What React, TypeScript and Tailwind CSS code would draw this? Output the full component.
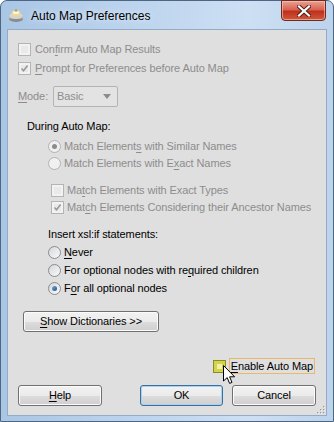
import React from "react";

const FONT = { fontFamily: '"Liberation Sans", Arial, sans-serif' };

function U({ children }: { children: React.ReactNode }) {
  return <span className="underline decoration-1 underline-offset-[2px]">{children}</span>;
}

function CheckMark({ color }: { color: string }) {
  return (
    <svg width="9" height="9" viewBox="0 0 9 9" className="absolute left-[1px] top-[1px]">
      <path d="M1.5 4.5 L3.5 6.8 L7.6 1.6" fill="none" stroke={color} strokeWidth="1.6" />
    </svg>
  );
}

function Check({ checked, disabled }: { checked?: boolean; disabled?: boolean }) {
  return (
    <span
      className={
        "relative w-[13px] h-[13px] shrink-0 border p-[2px] flex " +
        (disabled ? "border-[#b4b4b4] bg-[#f2f2f2]" : "border-[#8e8f8f] bg-white")
      }
    >
      <span
        className={
          "flex-1 " +
          (disabled
            ? "bg-[#e9e9e9]"
            : "bg-gradient-to-br from-[#c9ced4] to-[#f4f5f6]")
        }
      />
      {checked && <CheckMark color={disabled ? "#9a9a9a" : "#3a3a3a"} />}
    </span>
  );
}

function Radio({ checked, disabled }: { checked?: boolean; disabled?: boolean }) {
  return (
    <span
      className={
        "relative w-[13px] h-[13px] shrink-0 rounded-full border flex items-center justify-center " +
        (disabled
          ? "border-[#b2b2b2] bg-[#f0f0f0]"
          : "border-[#8a8c8e] bg-gradient-to-br from-[#d4d7da] to-[#fafafa]")
      }
    >
      {checked && (
        <span
          className={
            "w-[5px] h-[5px] rounded-full " +
            (disabled ? "bg-[#8c8c8c]" : "bg-gradient-to-br from-[#7fa9d6] to-[#1f4f86]")
          }
        />
      )}
    </span>
  );
}

function Btn({
  children,
  w,
  def,
}: {
  children: React.ReactNode;
  w: string;
  def?: boolean;
}) {
  return (
    <div
      className={
        "h-[21px] rounded-[3px] border flex items-center justify-center text-[11px] text-black " +
        w +
        (def
          ? " border-[#3c6f9e] shadow-[inset_0_0_0_1px_#a6d3f2]"
          : " border-[#707070] shadow-[inset_0_0_0_1px_#fbfbfb]")
      }
      style={{
        background:
          "linear-gradient(#f2f2f2 0%, #ebebeb 50%, #dddddd 51%, #cfcfcf 100%)",
      }}
    >
      {children}
    </div>
  );
}

function Row({
  h,
  className,
  children,
}: {
  h: string;
  className?: string;
  children: React.ReactNode;
}) {
  return <div className={"flex items-center " + h + " " + (className ?? "")}>{children}</div>;
}

export default function App() {
  const dis = "text-[#8d8d8d]";
  return (
    <div className="w-[334px] h-[422px] bg-white" style={FONT}>
      <div
        className="relative w-[334px] h-[422px] rounded-t-[7px] border border-[#4f6682] flex flex-col"
        style={{
          background:
            "linear-gradient(90deg, #a9c6e5 0%, #bcd4ee 40%, #cddff3 75%, #bcd3ec 100%)",
        }}
      >
        {/* Title bar */}
        <div className="h-[28px] flex items-center pl-[7px] shrink-0">
          <svg width="16" height="15" viewBox="0 0 16 15" className="mt-[1px]">
            <ellipse cx="8" cy="11" rx="7" ry="3" fill="#8c8c8c" />
            <rect x="1" y="8" width="14" height="3" fill="#a6a6a6" />
            <ellipse cx="8" cy="8" rx="7" ry="3" fill="#d9d4c6" />
            <path d="M3 8 Q3 2 8 2 Q13 2 13 8 Z" fill="#e8d8a8" />
            <ellipse cx="8" cy="4.5" rx="3" ry="1.5" fill="#fff7d9" />
            <circle cx="8" cy="2.5" r="1.2" fill="#c79a3c" />
          </svg>
          <span
            className="ml-[7px] text-[12px] text-black mt-[1px]"
            style={{ textShadow: "0 0 6px rgba(255,255,255,0.9)" }}
          >
            Auto Map Preferences
          </span>
        </div>
        {/* Close button */}
        <div
          className="absolute left-[280px] top-[-1px] w-[45px] h-[21px] rounded-b-[4px] border border-[#6b2a22] flex items-center justify-center shadow-[inset_0_0_0_1px_rgba(255,200,190,0.6)]"
          style={{ background: "linear-gradient(#e8a393 0%, #d9634f 45%, #c0301c 55%, #d05a3a 100%)" }}
        >
          <svg width="14" height="12" viewBox="0 0 14 12">
            <path
              d="M2 1.5 L12 10.5 M12 1.5 L2 10.5"
              stroke="#4a2018"
              strokeWidth="4"
              strokeLinecap="square"
            />
            <path
              d="M2 1.5 L12 10.5 M12 1.5 L2 10.5"
              stroke="#ffffff"
              strokeWidth="2.2"
              strokeLinecap="square"
            />
          </svg>
        </div>

        {/* Client area */}
        <div className="mx-[6px] h-[387px] border border-[#95abc5] bg-[#dfdfdf] flex flex-col px-[10px] pt-[10px] text-[11px] tracking-[-0.1px] relative">
          <Row h="h-[18px]">
            <Check disabled />
            <span className={"ml-[4px] " + dis}>
              Con<U>f</U>irm Auto Map Results
            </span>
          </Row>
          <Row h="h-[18px]" className="mt-[1px]">
            <Check disabled checked />
            <span className={"ml-[4px] " + dis}>
              <U>P</U>rompt for Preferences before Auto Map
            </span>
          </Row>
          <Row h="h-[21px]" className="mt-[9px]">
            <span className={dis + " w-[35px]"}>
              <U>M</U>ode:
            </span>
            <div className="w-[65px] h-[21px] rounded-[2px] border border-[#b0b4b8] bg-[#e3e3e3] flex items-center pl-[3px] pr-[6px]">
              <span className={dis}>Basic</span>
              <svg width="8" height="5" viewBox="0 0 8 5" className="ml-auto">
                <path d="M0 0 L8 0 L4 5 Z" fill="#8c8c8c" />
              </svg>
            </div>
          </Row>
          <Row h="h-[18px]" className="mt-[10px] pl-[9px]">
            <span className="text-black">During Auto Map:</span>
          </Row>
          <div className="pl-[30px] flex flex-col mt-[3px]">
            <Row h="h-[17px]">
              <Radio disabled checked />
              <span className={"ml-[3px] " + dis}>
                Match Element<U>s</U> with Similar Names
              </span>
            </Row>
            <Row h="h-[17px]">
              <Radio disabled />
              <span className={"ml-[3px] " + dis}>
                Match Elements with E<U>x</U>act Names
              </span>
            </Row>
          </div>
          <div className="pl-[33px] flex flex-col mt-[10px]">
            <Row h="h-[17px]">
              <Check disabled />
              <span className={"ml-[3px] " + dis}>
                Ma<U>t</U>ch Elements with Exact Types
              </span>
            </Row>
            <Row h="h-[17px]">
              <Check disabled checked />
              <span className={"ml-[3px] " + dis}>
                Mat<U>c</U>h Elements Considering their Ancestor Names
              </span>
            </Row>
          </div>
          <div className="pl-[30px] flex flex-col mt-[9px]">
            <Row h="h-[18px]">
              <span className="text-black">Insert xsl:if statements:</span>
            </Row>
            <Row h="h-[18px]">
              <Radio />
              <span className="ml-[3px] text-black">
                <U>N</U>ever
              </span>
            </Row>
            <Row h="h-[18px]">
              <Radio />
              <span className="ml-[3px] text-black">
                For optional nodes with re<U>q</U>uired children
              </span>
            </Row>
            <Row h="h-[18px]">
              <Radio checked />
              <span className="ml-[3px] text-black">
                F<U>o</U>r all optional nodes
              </span>
            </Row>
          </div>
          <div className="mt-[14px] pl-[5px] flex">
            <Btn w="w-[136px]">
              <span>
                <U>S</U>how Dictionaries &gt;&gt;
              </span>
            </Btn>
          </div>
          <div className="mt-[26px] h-[16px] flex items-center justify-end pr-[1px]">
            <span className="relative w-[13px] h-[13px] border border-[#8a8a30] bg-[#d4d444] flex items-center justify-center">
              <span className="w-[5px] h-[5px] bg-[#f0f0b0]" />
            </span>
            <span className="ml-[3px] h-[16px] px-[1px] border border-[#e9b86c] flex items-center text-black">
              <U>E</U>nable Auto Map
            </span>
          </div>
          <div className="mt-[11px] flex items-center">
            <Btn w="w-[84px]">
              <U>H</U>elp
            </Btn>
            <Btn w="w-[83px] ml-[38px]" def>
              OK
            </Btn>
            <Btn w="w-[84px] ml-[9px]">Cancel</Btn>
          </div>

          {/* resize grip */}
          <svg width="9" height="9" viewBox="0 0 9 9" className="absolute right-[1px] bottom-[1px]">
            {[
              [7, 1],
              [7, 4],
              [4, 4],
              [7, 7],
              [4, 7],
              [1, 7],
            ].map(([x, y], i) => (
              <g key={i}>
                <rect x={x + 0.6} y={y + 0.6} width="1.4" height="1.4" fill="#ffffff" />
                <rect x={x} y={y} width="1.4" height="1.4" fill="#9a9a9a" />
              </g>
            ))}
          </svg>

          {/* mouse cursor */}
          <svg
            width="13"
            height="20"
            viewBox="0 0 13 20"
            className="absolute left-[215px] top-[335px]"
          >
            <path
              d="M0.5 0.5 L0.5 16 L4.2 12.6 L6.6 18.4 L9 17.4 L6.6 11.8 L11.6 11.8 Z"
              fill="#ffffff"
              stroke="#000000"
              strokeWidth="1"
              strokeLinejoin="miter"
            />
          </svg>
        </div>
      </div>
    </div>
  );
}
